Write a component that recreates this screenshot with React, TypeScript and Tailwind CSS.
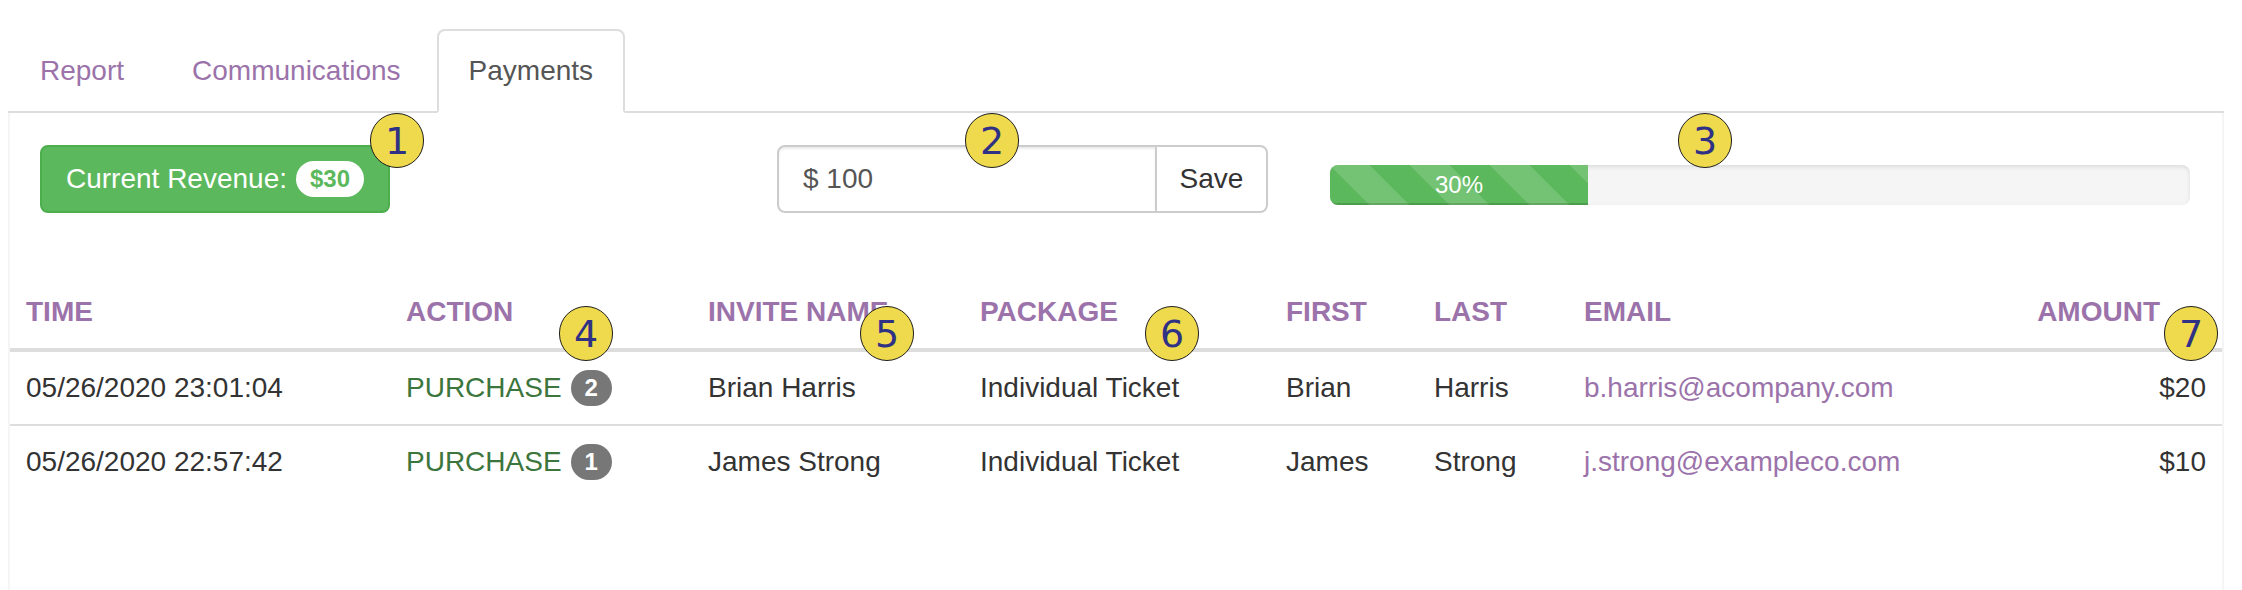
import React from 'react';

const purple = 'text-[#9b73aa]';

const tabs = [
  { label: 'Report', active: false },
  { label: 'Communications', active: false },
  { label: 'Payments', active: true },
];

const rows = [
  {
    time: '05/26/2020 23:01:04',
    count: 2,
    invite: 'Brian Harris',
    pkg: 'Individual Ticket',
    first: 'Brian',
    last: 'Harris',
    email: 'b.harris@acompany.com',
    amount: '$20',
  },
  {
    time: '05/26/2020 22:57:42',
    count: 1,
    invite: 'James Strong',
    pkg: 'Individual Ticket',
    first: 'James',
    last: 'Strong',
    email: 'j.strong@exampleco.com',
    amount: '$10',
  },
];

// numbered callouts drawn over the screenshot
const markers = [
  { n: 1, x: 370, y: 113 },
  { n: 2, x: 965, y: 113 },
  { n: 3, x: 1678, y: 113 },
  { n: 4, x: 559, y: 306 },
  { n: 5, x: 860, y: 306 },
  { n: 6, x: 1145, y: 306 },
  { n: 7, x: 2164, y: 306 },
];

const Marker: React.FC<{ n: number; x: number; y: number }> = ({ n, x, y }) => (
  <div
    className="absolute w-[54px] h-[55px] rounded-full bg-[#efd94c] border-[1.5px] border-[#1e1e1e] flex items-center justify-center text-[38px] leading-none text-[#2f3185] font-['DejaVu_Sans',sans-serif]"
    style={{ left: x, top: y }}
  >
    {n}
  </div>
);

const App: React.FC = () => {
  return (
    <div className="relative min-h-[590px] bg-white pt-[29px] pl-[8px] pr-[18px] font-['Liberation_Sans',Arial,sans-serif] text-[28px] leading-[40px] text-[#333]">
      <ul className="flex border-b-2 border-[#ddd]">
        {tabs.map((tab) => (
          <li key={tab.label} className="mr-[4px] -mb-[2px]">
            <a
              className={
                tab.active
                  ? 'block px-[30px] py-[20px] border-2 border-[#ddd] border-b-transparent rounded-t-[8px] bg-white text-[#555]'
                  : `block px-[30px] py-[20px] border-2 border-transparent rounded-t-[8px] ${purple}`
              }
            >
              {tab.label}
            </a>
          </li>
        ))}
      </ul>

      <div className="min-h-[477px] border-x-2 border-[#f5f5f5]">
        <div className="flex items-start pt-[32px] pl-[30px]">
          <div className="w-[737px]">
            <div className="inline-flex items-center h-[68px] px-[24px] border-2 border-[#4cae4c] bg-[#5cb85c] rounded-[8px] text-white">
              <span>Current Revenue:</span>
              <span className="ml-[9px] px-[14px] py-[6px] rounded-[20px] bg-white text-[#5cb85c] text-[24px] leading-[24px] font-bold">
                $30
              </span>
            </div>
          </div>

          <div className="flex w-[491px] h-[68px]">
            <input
              readOnly
              value="$ 100"
              className="w-[380px] h-full px-[24px] border-2 border-[#ccc] rounded-l-[8px] text-[#555] outline-none shadow-[inset_0_2px_2px_rgba(0,0,0,0.075)]"
            />
            <button className="w-[111px] h-full border-y-2 border-r-2 border-[#ccc] rounded-r-[8px] bg-white text-[#333]">
              Save
            </button>
          </div>

          <div className="ml-[62px] mt-[20px] w-[860px] h-[40px] rounded-[8px] bg-[#f5f5f5] overflow-hidden shadow-[inset_0_2px_4px_rgba(0,0,0,0.1)]">
            <div className="w-[30%] h-full bg-[#5cb85c] bg-[linear-gradient(45deg,rgba(255,255,255,.15)_25%,transparent_25%,transparent_50%,rgba(255,255,255,.15)_50%,rgba(255,255,255,.15)_75%,transparent_75%,transparent)] bg-[length:80px_80px] shadow-[inset_0_-2px_0_rgba(0,0,0,0.15)] text-center text-white text-[24px] leading-[40px]">
              30%
            </div>
          </div>
        </div>

        <table className="mt-[63px] w-full table-fixed">
          <thead>
            <tr className={`${purple} font-bold text-left`}>
              <th className="w-[380px] p-[16px] border-b-4 border-[#ddd]">TIME</th>
              <th className="w-[302px] p-[16px] border-b-4 border-[#ddd]">ACTION</th>
              <th className="w-[272px] p-[16px] border-b-4 border-[#ddd]">INVITE NAME</th>
              <th className="w-[306px] p-[16px] border-b-4 border-[#ddd]">PACKAGE</th>
              <th className="w-[148px] p-[16px] border-b-4 border-[#ddd]">FIRST</th>
              <th className="w-[150px] p-[16px] border-b-4 border-[#ddd]">LAST</th>
              <th className="p-[16px] border-b-4 border-[#ddd]">EMAIL</th>
              <th className="w-[250px] py-[16px] pl-[16px] pr-[62px] border-b-4 border-[#ddd] text-right">AMOUNT</th>
            </tr>
          </thead>
          <tbody>
            {rows.map((r, i) => (
              <tr key={r.time} className={i > 0 ? 'border-t-2 border-[#ddd]' : ''}>
                <td className="p-[16px]">{r.time}</td>
                <td className="p-[16px] whitespace-nowrap">
                  <span className="text-[#3c763d]">PURCHASE</span>
                  <span className="relative -top-[2px] ml-[9px] inline-block align-middle px-[14px] py-[6px] rounded-[20px] bg-[#777] text-white text-[24px] leading-[24px] font-bold">
                    {r.count}
                  </span>
                </td>
                <td className="p-[16px]">{r.invite}</td>
                <td className="p-[16px]">{r.pkg}</td>
                <td className="p-[16px]">{r.first}</td>
                <td className="p-[16px]">{r.last}</td>
                <td className={`p-[16px] ${purple}`}>{r.email}</td>
                <td className="p-[16px] text-right">{r.amount}</td>
              </tr>
            ))}
          </tbody>
        </table>
      </div>

      {markers.map((m) => (
        <Marker key={m.n} {...m} />
      ))}
    </div>
  );
};

export default App;
